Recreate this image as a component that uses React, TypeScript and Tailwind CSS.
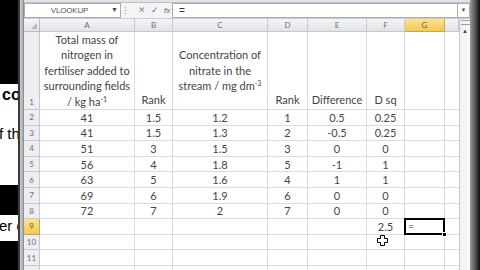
import React from "react";

const cols = ["A", "B", "C", "D", "E", "F", "G", ""];

const rows: string[][] = [
  ["41", "1.5", "1.2", "1", "0.5", "0.25", ""],
  ["41", "1.5", "1.3", "2", "-0.5", "0.25", ""],
  ["51", "3", "1.5", "3", "0", "0", ""],
  ["56", "4", "1.8", "5", "-1", "1", ""],
  ["63", "5", "1.6", "4", "1", "1", ""],
  ["69", "6", "1.9", "6", "0", "0", ""],
  ["72", "7", "2", "7", "0", "0", ""],
  ["", "", "", "", "", "2.5", "="],
  ["", "", "", "", "", "", ""],
  ["", "", "", "", "", "", ""],
  ["", "", "", "", "", "", ""],
];

const LeftStrip = () => (
  <div className="w-[18px] h-full flex flex-col overflow-hidden font-['Liberation_Sans',sans-serif] text-black whitespace-nowrap">
    <div className="h-[84px] bg-black shrink-0" />
    <div className="h-[101px] bg-white shrink-0 relative">
      <div className="absolute left-[2px] top-[3px] text-[16px] font-bold leading-none">co</div>
      <div className="absolute left-[-1px] top-[42px] text-[15px] leading-none">f th</div>
    </div>
    <div className="h-[30px] bg-black shrink-0" />
    <div className="h-[26px] bg-white shrink-0 relative">
      <div className="absolute left-[-1px] top-[3px] text-[15px] leading-none">er o</div>
    </div>
    <div className="flex-1 bg-black" />
  </div>
);

const FormulaBar = () => (
  <div className="h-[16px] flex items-stretch bg-[#f3f4f6] border-b border-[#c9ccd1] text-[#555] font-['Liberation_Sans',sans-serif]">
    <div className="w-[97px] bg-white border border-[#a9adb3] flex items-center relative">
      <span className="flex-1 text-center text-[8px] tracking-tight pr-[6px]">VLOOKUP</span>
      <span className="absolute right-[2px] text-[7px] text-[#444]">▼</span>
    </div>
    <div className="w-[51px] flex items-center gap-[5px] pl-[3px] text-[9px]">
      <span className="text-[#999] text-[10px]">⁝</span>
      <span className="text-[#8a8a8a] ml-[6px]">✕</span>
      <span className="text-[#6b6b6b]">✓</span>
      <span className="italic text-[8px] text-[#666]">fx</span>
    </div>
    <div className="flex-1 bg-white border border-[#a9adb3] flex items-center pl-[6px] text-[10px] text-[#333]">=</div>
    <div className="w-[12px] bg-white border border-[#a9adb3] border-l-0 flex items-center justify-center text-[6px] text-[#555]">▼</div>
  </div>
);

const Grid = () => (
  <div className="grid grid-cols-[16px_95px_38px_95px_40px_59px_38px_40px_14px] grid-rows-[13px_78px_repeat(12,15.6px)] text-[#444] font-['Lato',sans-serif] text-[11px] relative whitespace-nowrap">
    <div className="bg-gradient-to-b from-[#f4f5f6] to-[#e2e4e7] border-r border-b border-[#b7bcc3] flex items-end justify-end">
      <div className="w-0 h-0 border-l-[6px] border-l-transparent border-b-[6px] border-b-[#b5b9be] mr-[2px] mb-[2px]" />
    </div>
    {cols.map((c, i) => (
      <div
        key={i}
        className={
          c === "G"
            ? "bg-gradient-to-b from-[#fbe294] to-[#f3c94f] border-r border-b border-[#c9a74a] flex items-center justify-center text-[8px] text-[#6b5a2a]"
            : "bg-gradient-to-b from-[#f4f5f6] to-[#e2e4e7] border-r border-b border-[#c5c9ce] flex items-center justify-center text-[8px] text-[#6a6f76]"
        }
      >
        {c}
      </div>
    ))}

    <div className="bg-[#eceef1] border-r border-b border-[#c5c9ce] flex items-end justify-center pb-[1px] text-[8px] text-[#6a6f76]">1</div>
    <div className="border-r border-b border-[#dadcdf] flex flex-col justify-center items-center leading-[15.6px] text-center">
      <span>Total mass of</span>
      <span>nitrogen in</span>
      <span>fertiliser added to</span>
      <span>surrounding fields</span>
      <span>
        / kg ha<sup className="text-[7px] leading-none -top-[4px]">-1</sup>
      </span>
    </div>
    <div className="border-r border-b border-[#dadcdf] flex items-end justify-center leading-[15.6px] pb-[1px]">Rank</div>
    <div className="border-r border-b border-[#dadcdf] flex flex-col justify-center items-center leading-[15.6px] text-center">
      <span>Concentration of</span>
      <span>nitrate in the</span>
      <span>
        stream / mg dm<sup className="text-[7px] leading-none -top-[4px]">-3</sup>
      </span>
    </div>
    <div className="border-r border-b border-[#dadcdf] flex items-end justify-center leading-[15.6px] pb-[1px]">Rank</div>
    <div className="border-r border-b border-[#dadcdf] flex items-end justify-center leading-[15.6px] pb-[1px]">Difference</div>
    <div className="border-r border-b border-[#dadcdf] flex items-end justify-center leading-[15.6px] pb-[1px]">D sq</div>
    <div className="border-r border-b border-[#dadcdf]" />
    <div className="border-b border-[#dadcdf]" />

    {rows.map((r, ri) => (
      <React.Fragment key={ri}>
        <div
          className={
            ri === 7
              ? "bg-gradient-to-b from-[#fbe294] to-[#f3c94f] border-r border-b border-[#c9a74a] flex items-center justify-center text-[8px] text-[#6b5a2a]"
              : "bg-[#eceef1] border-r border-b border-[#c5c9ce] flex items-center justify-center text-[8px] text-[#6a6f76]"
          }
        >
          {ri + 2}
        </div>
        {r.map((v, ci) =>
          ri === 7 && ci === 6 ? (
            <div key={ci} className="border-2 border-black -mt-[1px] -ml-[1px] flex items-center pl-[2px] text-[10px] leading-none relative bg-white">
              {v}
              <div className="absolute right-[-4px] bottom-[-4px] w-[5px] h-[5px] bg-black border border-white" />
            </div>
          ) : (
            <div key={ci} className="border-r border-b border-[#dadcdf] flex items-center justify-center leading-none">
              {v}
            </div>
          )
        )}
        <div className="border-b border-[#dadcdf]" />
      </React.Fragment>
    ))}
    <div className="bg-[#eceef1] border-r border-b border-[#c5c9ce] flex items-center justify-center text-[8px] text-[#6a6f76]">12</div>

    <svg className="absolute left-[353px] top-[216px]" width="11" height="11" viewBox="0 0 11 11">
      <path d="M3.5 0.5h4v3h3v4h-3v3h-4v-3h-3v-4h3z" fill="white" stroke="black" strokeWidth="1" />
    </svg>
  </div>
);

const ScrollBar = () => (
  <div className="w-[11px] bg-gradient-to-r from-[#eef0f2] to-[#f8f9fa] border-l border-[#c5c9ce] flex flex-col items-center">
    <div className="h-[5px] w-[9px] mt-[1px] border-y border-[#9aa0a6]" />
    <div className="h-[9px] w-[9px] mt-[2px] flex items-center justify-center text-[6px] text-[#444]">▲</div>
  </div>
);

export default function App() {
  return (
    <div className="w-[480px] h-[270px] flex overflow-hidden bg-black">
      <LeftStrip />
      <div className="w-[6px] h-full flex">
        <div className="w-[2px] bg-[#3a3a3a]" />
        <div className="w-[3px] bg-gradient-to-r from-[#c9cbce] to-[#a9adb2]" />
        <div className="w-[1px] bg-[#8d9197]" />
      </div>
      <div className="w-[446px] h-full flex flex-col bg-white">
        <div className="h-[3px] bg-[#dfe3e8] border-b border-[#b9bfc6]" />
        <FormulaBar />
        <div className="flex flex-1 overflow-hidden">
          <div className="w-[435px] overflow-hidden">
            <Grid />
          </div>
          <ScrollBar />
        </div>
      </div>
      <div className="w-[10px] h-full bg-gradient-to-r from-[#9a9a9a] via-[#5a5a5a] to-[#111]" />
    </div>
  );
}
